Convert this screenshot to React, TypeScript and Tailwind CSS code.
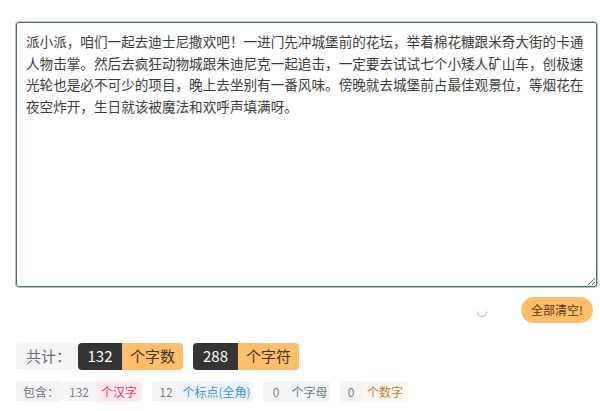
import { useState } from "react";

const TEXT =
  "派小派，咱们一起去迪士尼撒欢吧！一进门先冲城堡前的花坛，举着棉花糖跟米奇大街的卡通人物击掌。然后去疯狂动物城跟朱迪尼克一起追击，一定要去试试七个小矮人矿山车，创极速光轮也是必不可少的项目，晚上去坐别有一番风味。傍晚就去城堡前占最佳观景位，等烟花在夜空炸开，生日就该被魔法和欢呼声填满呀。";

const FONT = { fontFamily: '"Noto Sans CJK SC", "Noto Sans", sans-serif' };

type Part = {
  num: number;
  label: string;
  numCls: string;
  labelCls: string;
};

const parts: Part[] = [
  { num: 132, label: "个汉字", numCls: "w-[34px] bg-[#f6f6f7] text-[#7a7f8a]", labelCls: "w-[46px] bg-[#fee9ee] text-[#e5395c]" },
  { num: 12, label: "个标点(全角)", numCls: "w-[28px] bg-[#f4f4f5] text-[#7a7f8a]", labelCls: "w-[73px] bg-[#ecf5ff] text-[#3f8fd2]" },
  { num: 0, label: "个字母", numCls: "w-[26px] bg-[#f4f4f5] text-[#7a7f8a]", labelCls: "w-[41px] bg-[#f1f5f7] text-[#6b7785]" },
  { num: 0, label: "个数字", numCls: "w-[22px] bg-[#f4f4f5] text-[#7a7f8a]", labelCls: "w-[46px] bg-[#fdf6ec] text-[#b5822f]" },
];

function Spinner() {
  return (
    <svg width="12" height="12" viewBox="0 0 12 12" className="mr-[33px] mt-[3px]">
      <path d="M1.5 6 A4.5 4.5 0 0 0 10.5 6" fill="none" stroke="#c8ccd2" strokeWidth="1.6" strokeLinecap="round" />
    </svg>
  );
}

export default function App() {
  const [text, setText] = useState(TEXT);

  return (
    <div className="min-h-screen bg-white pl-4 pr-[3px] pt-[22px]" style={FONT}>
      <textarea
        value={text}
        onChange={(e) => setText(e.target.value)}
        className="block h-[265px] w-[581px] rounded-[3px] border border-[#4d6d73] px-[9px] py-2 text-[13.6px] leading-[21.6px] text-[#3c3c3c] shadow-[0_0_0_1px_#b5c3c6] outline-none"
        style={FONT}
      />

      <div className="mt-[10px] flex items-center justify-end pr-1">
        <Spinner />
        <button
          type="button"
          className="h-[26px] w-[72px] rounded-full bg-[#ffbd68] text-[12px] text-[#4b3a22]"
          onClick={() => setText("")}
        >
          全部清空!
        </button>
      </div>

      <div className="mt-5 flex h-[27px] items-stretch text-[15px]">
        <span className="flex w-[62px] items-center rounded-[4px] bg-[#f4f4f5] pl-[10px] text-[#6b6f78]">共计：</span>
        <span className="flex">
          <span className="flex w-[44px] items-center justify-center rounded-l-[4px] bg-[#343434] text-white">132</span>
          <span className="flex w-[61px] items-center justify-center rounded-r-[4px] bg-[#ffbe6a] text-[#3d3326]">个字数</span>
        </span>
        <span className="ml-[10px] flex">
          <span className="flex w-[45px] items-center justify-center rounded-l-[4px] bg-[#343434] text-white">288</span>
          <span className="flex w-[61px] items-center justify-center rounded-r-[4px] bg-[#ffbe6a] text-[#3d3326]">个字符</span>
        </span>
      </div>

      <div className="mt-[11px] flex h-[21px] items-stretch text-[12px]">
        <span className="flex w-[46px] items-center rounded-[4px] bg-[#f4f4f5] pl-[7px] text-[#6b7280]">包含：</span>
        {parts.map((p, i) => (
          <span key={i} className={`flex ${i > 0 ? "ml-[10px]" : ""}`}>
            <span className={`flex items-center justify-center rounded-l-[4px] ${p.numCls}`}>{p.num}</span>
            <span className={`flex items-center justify-center rounded-r-[4px] ${p.labelCls}`}>{p.label}</span>
          </span>
        ))}
      </div>
    </div>
  );
}
